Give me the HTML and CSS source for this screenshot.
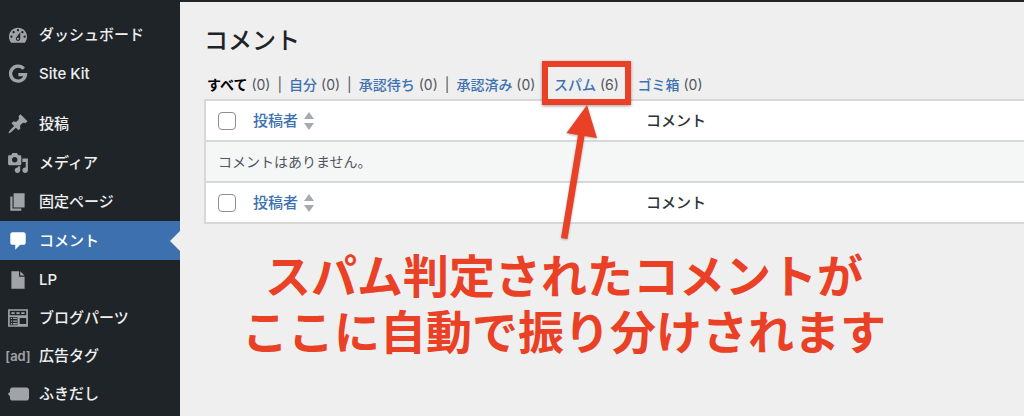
FILE: index.html
```
<!DOCTYPE html>
<html lang="ja">
    <head>
        <meta charset="utf-8">
        <title>コメント</title>
        <link rel="stylesheet" href="styles.css">
    </head>
    <body>
        <div id="adminbar"></div>
        <div id="wrap">
            <nav id="menu">
                <ul class="menu-group">
                    <li><a href="#">
                        <svg class="icon" viewBox="0 0 20 20"><path fill-rule="evenodd" d="M3.76 17h12.48c1.1-1.37 1.96-3.11 1.96-5.400 0-4.620-3.680-8.200-8.200-8.200s-8.200 3.580-8.200 8.200c0 2.290.86 4.030 1.960 5.400zM10 4.600c.55 0 1 .45 1 1s-.45 1-1 1-1-.45-1-1 .45-1 1-1zM6 6.400c.55 0 1 .45 1 1s-.45 1-1 1-1-.45-1-1 .45-1 1-1zm8 0c.55 0 1 .45 1 1s-.45 1-1 1-1-.45-1-1 .45-1 1-1zm-5.370 5.650L12 7.500v6c0 1.100-.9 2-2 2s-2-.9-2-2c0-.57.24-1.080.63-1.450zM4 10.500c.55 0 1 .45 1 1s-.45 1-1 1-1-.45-1-1 .45-1 1-1zm12 0c.55 0 1 .45 1 1s-.45 1-1 1-1-.45-1-1 .45-1 1-1zm-5 3c0-.55-.45-1-1-1s-1 .45-1 1 .45 1 1 1 1-.45 1-1z"/></svg>
                        ダッシュボード</a></li>
                    <li><a href="#">
                        <svg class="icon" viewBox="0 0 20 20"><path fill="none" stroke="currentColor" stroke-width="3" d="M15.200 5.200A6.800 6.800 0 1 0 16.800 10.600H10.300"/></svg>
                        Site Kit</a></li>
                </ul>
                <ul class="menu-group">
                    <li><a href="#">
                        <svg class="icon" viewBox="0 0 20 20"><path d="M10.44 3.02l1.82-1.82 6.36 6.35-1.83 1.82c-1.05-.68-2.48-.57-3.41.36l-.75.75c-.92.93-1.04 2.35-.35 3.41l-1.83 1.82-2.41-2.41-2.8 2.79c-.42.42-3.38 2.71-3.8 2.29s1.86-3.39 2.28-3.81l2.79-2.79L4.1 9.36l1.83-1.82c1.05.69 2.48.57 3.4-.36l.75-.75c.93-.92 1.05-2.35.36-3.41z"/></svg>
                        投稿</a></li>
                    <li><a href="#">
                        <svg class="icon" viewBox="0 0 20 20"><path fill-rule="evenodd" d="M13 11V4c0-.55-.45-1-1-1h-1.67L9 1H5L3.67 3H2c-.55 0-1 .45-1 1v7c0 .55.45 1 1 1h10c.55 0 1-.45 1-1zM7 4.5c1.38 0 2.5 1.12 2.5 2.5S8.38 9.5 7 9.5 4.5 8.38 4.5 7 5.62 4.5 7 4.5zM14 6h5v10.5c0 1.38-1.12 2.5-2.5 2.5S14 17.88 14 16.5s1.12-2.5 2.5-2.5c.17 0 .34.02.5.05V9h-3V6zm-4 8.05V13h2v3.5c0 1.38-1.12 2.5-2.5 2.5S7 17.88 7 16.5 8.12 14 9.5 14c.17 0 .34.02.5.05z"/></svg>
                        メディア</a></li>
                    <li><a href="#">
                        <svg class="icon" viewBox="0 0 20 20"><path d="M6 15V2h10v13H6zm-1 1h8v2H3V5h2v11z"/></svg>
                        固定ページ</a></li>
                    <li class="current"><a href="#">
                        <svg class="icon" viewBox="0 0 20 20"><path d="M5 2h10c1.100 0 2 .9 2 2v7.500c0 1.100-.9 2-2 2h-3l-4.500 4.500v-4.500H5c-1.100 0-2-.9-2-2V4c0-1.100.9-2 2-2z"/></svg>
                        コメント</a></li>
                </ul>
                <ul class="menu-group custom">
                    <li><a href="#">
                        <svg class="icon" viewBox="0 0 20 20"><path d="M4 2h7v5h5v11H4zM12 2l4 4h-4z"/></svg>
                        LP</a></li>
                    <li><a href="#">
                        <svg class="icon" viewBox="0 0 20 20"><path fill-rule="evenodd" d="M1 2h18v16H1zM2.5 3.5v4h15v-4zM2.5 9v7.500h7V9zM11.500 10v5.500h6V10z"/><path d="M4 4.700h3v1.600H4zM8.500 4.700h3v1.600h-3zM13 4.700h3v1.600h-3zM3.500 9.700h1.200v1.200H3.500zM5.500 9.700h3.500v1.200H5.500zM3.500 12.200h1.200v1.200H3.500zM5.500 12.200h3.500v1.200H5.500zM3.500 14.600h1.200v1.200H3.500zM5.500 14.600h3.500v1.200H5.500z"/></svg>
                        ブログパーツ</a></li>
                    <li><a href="#">
                        <span class="icon icon-ad">[ad]</span>
                        広告タグ</a></li>
                    <li><a href="#">
                        <svg class="icon" viewBox="0 0 20 20"><path d="M5 4h12.500c1.400 0 2.500 1 2.500 2.400v7.200c0 1.400-1.100 2.400-2.500 2.400H5c-1.300 0-2.300-1-2.300-2.400V12L.8 10l1.900-2V6.400C2.700 5 3.700 4 5 4z"/></svg>
                        ふきだし</a></li>
                </ul>
            </nav>
            <main id="content">
                <h1>コメント</h1>
                <ul id="filters">
                    <li><a href="#" class="active">すべて</a> (0)</li>
                    <li><a href="#">自分</a> (0)</li>
                    <li><a href="#">承認待ち</a> (0)</li>
                    <li><a href="#">承認済み</a> (0)</li>
                    <li class="spam"><a href="#">スパム</a> (6)
                        <span class="highlight"></span>
                        <svg class="arrow" viewBox="0 0 40 140"><path d="M27 1L37 34 24.500 32 7.500 135 1 134 18 31 6.500 29z"/></svg>
                    </li>
                    <li><a href="#">ゴミ箱</a> (0)</li>
                </ul>
                <table id="comments">
                    <thead>
                        <tr>
                            <th class="check"><input type="checkbox" aria-label="すべて選択"></th>
                            <th class="author"><a href="#">投稿者<svg class="sort" viewBox="0 0 10 18"><path d="M5 0l5 7H0zM5 18l5-7H0z"/></svg></a></th>
                            <th>コメント</th>
                        </tr>
                    </thead>
                    <tbody>
                        <tr>
                            <td colspan="3">コメントはありません。</td>
                        </tr>
                    </tbody>
                    <tfoot>
                        <tr>
                            <th class="check"><input type="checkbox" aria-label="すべて選択"></th>
                            <th class="author"><a href="#">投稿者<svg class="sort" viewBox="0 0 10 18"><path d="M5 0l5 7H0zM5 18l5-7H0z"/></svg></a></th>
                            <th>コメント</th>
                        </tr>
                    </tfoot>
                </table>
                <p id="note">スパム判定されたコメントが<br>ここに自動で振り分けされます</p>
            </main>
        </div>
    </body>
</html>
```

FILE: styles.css
```
* {
    box-sizing: border-box;
}
body {
    background: #efefef;
    font-family: Inter, "Noto Sans CJK JP", sans-serif;
    font-size: 14px;
    line-height: 20px;
    color: #50575e;
    margin: 0;
    min-height: 100vh;
    display: flex;
    flex-direction: column;
    overflow-x: hidden;
}
a {
    color: #3c72b0;
    text-decoration: none;
}
ul {
    list-style: none;
    margin: 0;
    padding: 0;
}
#adminbar {
    background: #1f2428;
    height: 2px;
}
#wrap {
    display: flex;
    flex: 1;
}

/* sidebar */
#menu {
    background: #1f2428;
    width: 180px;
    flex: none;
    padding-top: 13px;
}
.menu-group + .menu-group {
    margin-top: 11px;
}
.menu-group + .custom {
    margin-top: 1px;
}
.menu-group a {
    display: flex;
    align-items: center;
    gap: 10px;
    height: 39px;
    padding-left: 7px;
    font-size: 15px;
    font-weight: 500;
    color: #f0f0f1;
}
.custom a {
    height: 38px;
}
.icon {
    width: 22px;
    height: 22px;
    flex: none;
    color: #a0a4a9;
    fill: currentColor;
}
.icon-ad {
    display: flex;
    align-items: center;
    justify-content: center;
    font-size: 13px;
    font-weight: 600;
}
.current {
    position: relative;
}
.current a {
    background: #3c70ae;
    color: #fff;
}
.current .icon {
    color: #fff;
}
.current::after {
    content: "";
    position: absolute;
    right: 0;
    top: 10px;
    border: 10px solid transparent;
    border-left-width: 0;
    border-right-color: #efefef;
}

/* content */
#content {
    flex: 1;
    min-width: 0;
    padding: 20px 0 0 24px;
}
h1 {
    font-size: 24px;
    font-weight: 500;
    line-height: 38px;
    color: #1d2327;
    margin: 0;
}
#filters {
    display: flex;
    gap: 7px;
    padding: 15px 0 4px 3px;
}
#filters li {
    white-space: nowrap;
}
#filters li + li::before {
    content: "|";
    margin-right: 7px;
}
#filters a {
    font-weight: 500;
}
#filters .active {
    color: #000;
    font-weight: 700;
}
.spam {
    position: relative;
}
.highlight {
    position: absolute;
    left: 0;
    right: -12px;
    top: -14px;
    height: 44px;
    border: 6px solid #ea4025;
    box-shadow: 0 1px 3px rgba(0,0,0,0.4);
}
.arrow {
    position: absolute;
    left: 18px;
    top: 29px;
    width: 40px;
    height: 140px;
    fill: #ea4025;
    filter: drop-shadow(0 1px 1px rgba(0,0,0,0.3));
}
#comments {
    width: 100%;
    table-layout: fixed;
    border-collapse: collapse;
    border: 2px solid #d6d8d9;
    border-right: 0;
    background: #fff;
}
#comments tr {
    height: 41px;
    border-bottom: 2px solid #d6d8d9;
}
#comments th {
    padding: 0;
    text-align: left;
    font-size: 15px;
    font-weight: 500;
    color: #2c3338;
}
#comments td {
    padding: 0 12px;
    background: #f5f7f7;
}
#comments .check {
    width: 48px;
    padding-left: 12px;
}
#comments .author {
    width: 48%;
}
.author a {
    display: flex;
    align-items: center;
    gap: 6px;
}
.sort {
    width: 10px;
    height: 18px;
    fill: #a7aaad;
}
input[type="checkbox"] {
    appearance: none;
    display: block;
    width: 18px;
    height: 18px;
    margin: 0;
    border: 1px solid #8c8f94;
    border-radius: 4px;
    background: #fff;
}
#note {
    width: fit-content;
    margin: 24px 0 0 38px;
    font-size: 46px;
    font-weight: 700;
    line-height: 56px;
    text-align: center;
    color: #ea4025;
}
```
